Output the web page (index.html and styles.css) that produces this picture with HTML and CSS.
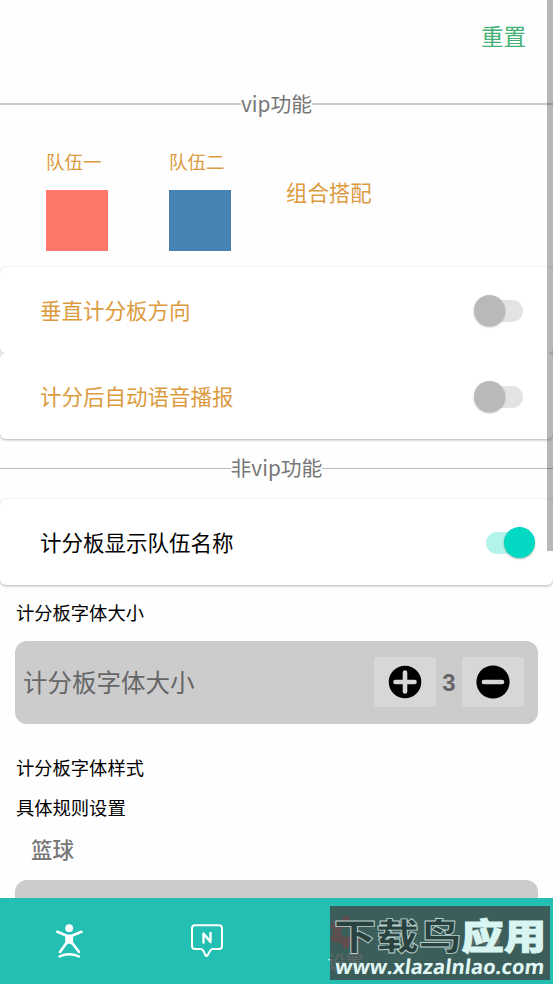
FILE: index.html
```html
<!DOCTYPE html>
<html lang="zh-CN">
<head>
<meta charset="utf-8">
<title>设置</title>
<link rel="stylesheet" href="styles.css">
</head>
<body>
<div class="app">
  <main class="content">
    <header class="top"><span class="reset">重置</span></header>
    <div class="divider first"><span>vip功能</span></div>
    <section class="colors">
      <div class="team"><span>队伍一</span><i class="swatch red"></i></div>
      <div class="team"><span>队伍二</span><i class="swatch blue"></i></div>
      <span class="combo">组合搭配</span>
    </section>
    <div class="group">
      <div class="card vip"><span>垂直计分板方向</span><i class="switch"></i></div>
      <div class="card vip"><span>计分后自动语音播报</span><i class="switch"></i></div>
    </div>
    <div class="divider second"><span>非vip功能</span></div>
    <div class="card"><span>计分板显示队伍名称</span><i class="switch on"></i></div>
    <h2 class="label size">计分板字体大小</h2>
    <div class="panel">
      <span class="panel-name">计分板字体大小</span>
      <button class="step"><svg width="34" height="34" viewBox="0 0 34 34"><circle cx="17" cy="17" r="16.3"/><path d="M17 7.500v19M7.500 17h19"/></svg></button>
      <b class="value">3</b>
      <button class="step"><svg width="34" height="34" viewBox="0 0 34 34"><circle cx="17" cy="17" r="16.6"/><path d="M8 17h18"/></svg></button>
    </div>
    <h2 class="label style">计分板字体样式</h2>
    <h2 class="label rules">具体规则设置</h2>
    <h3 class="sport">篮球</h3>
    <div class="panel next"></div>
    <i class="scrollbar"></i>
  </main>
  <nav class="tabs">
    <a class="tab"><svg width="34" height="40" viewBox="0 0 34 40"><circle cx="17.2" cy="7.2" r="3.900" fill="#fff"/><path d="M5.300 10.800L14.800 14.800h5L29.500 10.800M14.800 15.500v6L8 31M19.800 15.500v6L27 31" fill="none" stroke="#fff" stroke-width="2.600" stroke-linecap="round" stroke-linejoin="round"/><path d="M13.500 14h7.500v7l2 4-5.700-2.500L11.500 25l2-4z" fill="#fff"/><path d="M7.500 35.500Q17.200 31 27 35.500" fill="none" stroke="#fff" stroke-width="2.400" stroke-linecap="round"/></svg></a>
    <a class="tab"><svg width="34" height="40" viewBox="0 0 34 40" fill="none" stroke="#fff" stroke-linecap="round" stroke-linejoin="round"><path stroke-width="2" d="M5 4.300H29Q32 4.300 32 7.300V25Q32 28 29 28H23Q21 28 20 30L17.500 34.300Q16.500 35.700 15.500 34.300L13.500 30Q12.500 28 10.500 28H5Q2 28 2 25V7.300Q2 4.300 5 4.300Z"/><path stroke-width="2.400" d="M13.500 21.500V12.500L20.500 21V12"/></svg></a>
    <a class="tab active"><svg width="34" height="34" viewBox="0 0 34 34"><circle cx="17" cy="17" r="9" fill="none" stroke="#f0606c" stroke-width="8"/><path d="M17 1v6M17 27v6M3 9l5 3M26 22l5 3M3 25l5-3M26 12l5-3" stroke="#f0606c" stroke-width="7"/></svg><span>设置</span></a>
    <a class="tab"><svg width="34" height="12" viewBox="0 0 34 12" fill="#fff"><circle cx="5" cy="6" r="4"/><circle cx="17" cy="6" r="4"/><circle cx="29" cy="6" r="4"/></svg></a>
  </nav>
  <aside class="watermark">
    <div class="brand"><span>下载鸟</span><em>应用</em></div>
    <div class="site">www.xlazalnlao.com</div>
  </aside>
</div>
</body>
</html>
```
FILE: styles.css
```css
* { box-sizing: border-box; }
body { margin: 0; background: #fefefe; font-family: "Noto Sans CJK SC", sans-serif; }
.app { position: relative; width: 553px; height: 984px; display: flex; flex-direction: column; overflow: hidden; }
.content { position: relative; height: 898px; overflow: hidden; display: flex; flex-direction: column; }
.content > * { flex-shrink: 0; }
i, em { font-style: normal; }
.top { height: 74px; padding: 0 27px 0 0; text-align: right; line-height: 70px; color: #43b075; font-size: 22.500px; }
.divider { display: flex; align-items: center; height: 60px; color: #777; font-size: 20.800px; white-space: nowrap; }
.divider span { padding-bottom: 2px; }
.divider::before, .divider::after { content: ""; flex: 1; height: 2px; background: #cdcdcd; }
.second { height: 58px; margin: 0 0 2px; }
.second::before, .second::after { height: 1px; background: #bbb; }
.colors { display: flex; height: 133px; padding: 15px 0 0 46px; color: #dc9b3f; }
.team { width: 123px; font-size: 18.500px; line-height: 24px; }
.team span { display: block; height: 41px; }
.swatch { display: block; width: 61.500px; height: 61px; background: #ff776b; }
.blue { background: #4682b4; }
.combo { padding-top: 30px; margin-left: -6px; font-size: 21.400px; line-height: 26px; }
.group { border-radius: 6px; background: #e4e4e4; box-shadow: 0 1px 3px rgba(0,0,0,.3); }
.card { height: 86px; padding: 0 18px 0 40px; display: flex; align-items: center; justify-content: space-between; border-radius: 6px; background: #fff; box-shadow: 0 1px 3px rgba(0,0,0,.3); color: #000; font-size: 21.500px; }
.card > span { padding-bottom: 2px; }
.vip { color: #dc9b3f; padding-right: 30px; box-shadow: none; }
.switch { position: relative; width: 49px; height: 22px; margin-top: 1px; border-radius: 11px; background: linear-gradient(90deg, transparent 10px, #e3e3e3 10px); }
.switch::before { content: ""; position: absolute; left: 0; top: -5px; width: 31px; height: 31px; border-radius: 50%; background: #b9b9b9; box-shadow: 0 1px 2px rgba(0,0,0,.3); }
.on { background: linear-gradient(90deg, #b3f3eb 38px, transparent 38px); }
.on::before { left: 18px; background: #03d8c3; }
.label { margin: 0; font-weight: 400; font-size: 18.300px; line-height: 28px; padding-left: 16px; }
.size { margin-top: 13px; }
.panel { height: 83px; margin: 15px 15px 0; padding: 0 14px 0 8px; border-radius: 12px; background: #ccc; display: flex; align-items: center; width: 523px; }
.panel-name { flex: 1; font-size: 24.500px; padding-bottom: 2px; color: #666; }
.step { width: 62px; height: 50px; margin-bottom: 1px; padding: 0; border: 0; border-radius: 4px; background: #d6d8d7; display: flex; align-items: center; justify-content: center; }
.step path { stroke: #d6d8d7; stroke-width: 4.600; stroke-linecap: round; }
.value { width: 26px; text-align: center; color: #666; font: 700 24px "Liberation Sans", sans-serif; }
.style { margin-top: 29px; }
.rules { margin-top: 12px; }
.sport { margin: 13px 0 0 31px; font-size: 21.500px; line-height: 30px; font-weight: 500; color: #777; }
.next { margin-top: 16px; }
.scrollbar { position: absolute; right: 0; top: 0; width: 6px; height: 551px; background: rgba(0,0,0,.28); }
.tabs { height: 86px; display: grid; grid-template-columns: repeat(4, 1fr); background: #22bfb2; }
.tab { display: flex; flex-direction: column; align-items: center; justify-content: center; color: #fff; font-size: 18px; line-height: 24px; }
.active { padding-top: 6px; }
.watermark { position: absolute; left: 330px; top: 906px; width: 220px; height: 74px; background: rgba(66,75,73,.84); text-align: center; white-space: nowrap; }
.brand { display: flex; justify-content: center; height: 48px; font-size: 42.500px; line-height: 58px; font-weight: 900; color: #29423f; -webkit-text-stroke: 1px #b9d0cd; transform: scaleY(.86); }
.brand em { color: #d9f5f2; -webkit-text-stroke-color: #d9f5f2; }
.site { font: 700 20.300px/24px "Open Sans", sans-serif; color: #e0f8f5; transform: skewX(-7deg); }
```
